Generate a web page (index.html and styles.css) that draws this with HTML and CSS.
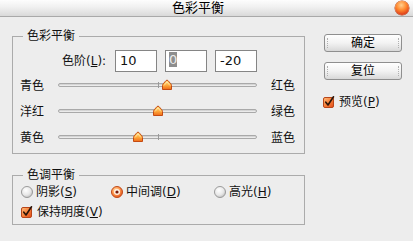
FILE: index.html
```html
<!DOCTYPE html>
<html lang="zh-CN">
<head>
<meta charset="utf-8">
<title>色彩平衡</title>
<link rel="stylesheet" href="styles.css">
</head>
<body>
<div class="window">
  <div class="titlebar">
    <span class="title">色彩平衡</span>
    <span class="close"></span>
  </div>
  <div class="content">
    <div class="main">
      <fieldset class="group balance">
        <legend>色彩平衡</legend>
        <div class="levels">
          <span class="levels-label">色阶(<u>L</u>):</span>
          <div class="field">10</div>
          <div class="field"><span class="sel">0</span></div>
          <div class="field">-20</div>
        </div>
        <div class="slider-row">
          <span class="lbl">青色</span>
          <div class="track"><span class="tick"></span><span class="thumb" style="left:55%"><svg width="12" height="11" viewBox="0 0 12 11"><use href="#thumb"/></svg></span></div>
          <span class="lbl">红色</span>
        </div>
        <div class="slider-row">
          <span class="lbl">洋红</span>
          <div class="track"><span class="tick"></span><span class="thumb" style="left:50%"><svg width="12" height="11" viewBox="0 0 12 11"><use href="#thumb"/></svg></span></div>
          <span class="lbl">绿色</span>
        </div>
        <div class="slider-row">
          <span class="lbl">黄色</span>
          <div class="track"><span class="tick"></span><span class="thumb" style="left:40%"><svg width="12" height="11" viewBox="0 0 12 11"><use href="#thumb"/></svg></span></div>
          <span class="lbl">蓝色</span>
        </div>
      </fieldset>
      <fieldset class="group tone">
        <legend>色调平衡</legend>
        <div class="radios">
          <span class="opt"><svg class="radio" width="12" height="12" viewBox="0 0 12 12"><use href="#radio-off"/></svg><span>阴影(<u>S</u>)</span></span>
          <span class="opt"><svg class="radio" width="12" height="12" viewBox="0 0 12 12"><use href="#radio-on"/></svg><span>中间调(<u>D</u>)</span></span>
          <span class="opt"><svg class="radio" width="12" height="12" viewBox="0 0 12 12"><use href="#radio-off"/></svg><span>高光(<u>H</u>)</span></span>
        </div>
        <div class="opt check-row"><svg class="check" width="12" height="12" viewBox="0 0 12 12"><use href="#checkbox"/></svg><span>保持明度(<u>V</u>)</span></div>
      </fieldset>
    </div>
    <div class="side">
      <div class="button">确定</div>
      <div class="button">复位</div>
      <div class="opt preview"><svg class="check" width="12" height="12" viewBox="0 0 12 12"><use href="#checkbox"/></svg><span>预览(<u>P</u>)</span></div>
    </div>
  </div>
</div>

<svg class="defs" width="0" height="0">
  <defs>
    <linearGradient id="thumbFill" x1="0" y1="0" x2="0" y2="1">
      <stop offset="0" stop-color="#ffe08a"/>
      <stop offset="0.5" stop-color="#ffb040"/>
      <stop offset="1" stop-color="#ef6a18"/>
    </linearGradient>
    <radialGradient id="radioOff" cx="0.4" cy="0.35" r="0.7">
      <stop offset="0" stop-color="#ffffff"/>
      <stop offset="0.6" stop-color="#e8e8e8"/>
      <stop offset="1" stop-color="#bdbdbd"/>
    </radialGradient>
    <radialGradient id="radioOn" cx="0.4" cy="0.35" r="0.7">
      <stop offset="0" stop-color="#ffe0b0"/>
      <stop offset="0.5" stop-color="#ff9a50"/>
      <stop offset="1" stop-color="#e0501a"/>
    </radialGradient>
    <linearGradient id="checkFill" x1="0" y1="0" x2="1" y2="1">
      <stop offset="0" stop-color="#ffc080"/>
      <stop offset="0.5" stop-color="#f8803a"/>
      <stop offset="1" stop-color="#e04a18"/>
    </linearGradient>
    <g id="thumb">
      <path d="M1.5 10.5 V6.5 Q1.5 5.6 2.3 4.7 L5 1.6 Q6 0.6 7 1.6 L9.7 4.7 Q10.5 5.6 10.5 6.5 V10.5 Z" fill="url(#thumbFill)" stroke="#c44a12" stroke-width="1"/>
      <path d="M3 6.5 L6 3 L9 6.5" fill="none" stroke="#fff4c8" stroke-width="0.8" opacity="0.8"/>
    </g>
    <g id="radio-off">
      <circle cx="6" cy="6" r="5.5" fill="url(#radioOff)" stroke="#9a9a9a" stroke-width="1"/>
    </g>
    <g id="radio-on">
      <circle cx="6" cy="6" r="5.5" fill="url(#radioOn)" stroke="#c04a1a" stroke-width="1"/>
      <circle cx="6" cy="6" r="3" fill="#fff2e6"/>
      <circle cx="6" cy="6" r="1.6" fill="#7a1a08"/>
    </g>
    <g id="checkbox">
      <rect x="0.5" y="1.5" width="10" height="10" rx="1.5" fill="url(#checkFill)" stroke="#b8461a" stroke-width="1"/>
      <path d="M2.8 6.2 L5 9 L10.5 0.8" fill="none" stroke="#2a1408" stroke-width="1.6" stroke-linecap="round" stroke-linejoin="round"/>
    </g>
  </defs>
</svg>
</body>
</html>
```

FILE: styles.css
```css
html, body {
  margin: 0;
  padding: 0;
}

body {
  width: 413px;
  height: 241px;
  overflow: hidden;
  background: #ededed;
  font-family: "DejaVu Sans", "Noto Sans CJK SC", sans-serif;
  font-size: 12px;
  color: #111;
}

.window {
  width: 413px;
  height: 241px;
  background: #ededed;
}

.titlebar {
  height: 16px;
  border-bottom: 1px solid #a9a9a9;
  background: linear-gradient(#fdfdfd, #f0f0f0 45%, #d9d9d9);
  display: flex;
  align-items: center;
  justify-content: space-between;
  padding-left: 172px;
  padding-right: 4px;
}

.title {
  font-weight: 400;
  font-size: 13px;
  line-height: 16px;
  color: #000;
}

.close {
  width: 14px;
  height: 14px;
  border-radius: 50%;
  background: radial-gradient(circle at 45% 30%, #ffd090 0%, #ff8a30 40%, #e0401a 75%, #b02808 100%);
  box-shadow: 0 0 0 0.5px #b04010;
}

.content {
  display: flex;
  padding-left: 12px;
  gap: 18px;
}

.main {
  width: 293px;
  display: flex;
  flex-direction: column;
}

.group {
  margin: 0;
  min-width: 0;
  border: 1px solid #ababab;
  padding: 0 8px 0 7px;
}

.group legend {
  margin-left: 3px;
  padding: 0 4px;
  line-height: 16px;
  height: 16px;
  font-size: 12px;
}

.balance {
  margin-top: 11px;
  padding-top: 6px;
  padding-bottom: 3px;
}

.levels {
  display: flex;
  align-items: center;
  height: 22px;
  padding-left: 42px;
  gap: 8px;
}

.levels-label {
  width: 44px;
  margin-right: 1px;
  line-height: 16px;
  white-space: nowrap;
}

.field {
  box-sizing: border-box;
  width: 42px;
  height: 22px;
  border: 1px solid #858585;
  background: #fff;
  padding-left: 4px;
  font-size: 13px;
  line-height: 20px;
  color: #111;
}

.sel {
  display: inline-block;
  margin-left: -1px;
  background: #8e8e8e;
  color: #ececec;
  line-height: 15px;
  width: 8px;
  text-align: center;
  vertical-align: 1px;
}

.slider-row {
  display: flex;
  align-items: center;
  height: 26px;
}

.slider-row:first-of-type {
  margin-top: 3px;
}

.lbl {
  width: 24px;
  line-height: 16px;
  white-space: nowrap;
  position: relative;
  top: 1px;
}

.track {
  position: relative;
  box-sizing: border-box;
  width: 199px;
  height: 4px;
  margin: 0 14px;
  border: 1px solid #a9a9a9;
  border-radius: 2px;
  background: linear-gradient(#c9c9c9, #f6f6f6);
}

.tick {
  position: absolute;
  left: 50%;
  top: -2px;
  width: 1px;
  height: 6px;
  background: #9a9a9a;
}

.thumb {
  position: absolute;
  top: -5px;
  width: 12px;
  height: 11px;
  transform: translateX(-50%);
}

.thumb svg {
  display: block;
}

.tone {
  margin-top: 13px;
  padding-top: 1px;
  padding-bottom: 4px;
}

.radios {
  display: grid;
  grid-template-columns: 90px 103px auto;
  height: 16px;
  align-items: center;
  padding-left: 1px;
}

.opt {
  display: flex;
  align-items: center;
  gap: 3px;
  line-height: 16px;
  white-space: nowrap;
}

.opt svg {
  display: block;
  flex: none;
}

.check-row {
  margin-top: 4px;
  height: 16px;
  padding-left: 1px;
  gap: 4px;
}

.side {
  display: flex;
  flex-direction: column;
  padding-top: 17px;
}

.button {
  position: relative;
  box-sizing: border-box;
  width: 78px;
  height: 18px;
  margin-left: 1px;
  margin-bottom: 10px;
  border: 1px solid #8f8f8f;
  border-radius: 3px;
  background: linear-gradient(#ffffff, #f3f3f3 50%, #d8d8d8);
  text-align: center;
  line-height: 16px;
  color: #000;
}

.button::before,
.button::after {
  content: "";
  position: absolute;
  top: 3px;
  height: 10px;
  border-left: 1px dotted #b0b0b0;
}

.button::before {
  left: 2px;
}

.button::after {
  right: 2px;
}

.preview {
  margin-top: 4px;
  height: 16px;
  gap: 4px;
}

.defs {
  position: absolute;
  width: 0;
  height: 0;
  overflow: hidden;
}
```
